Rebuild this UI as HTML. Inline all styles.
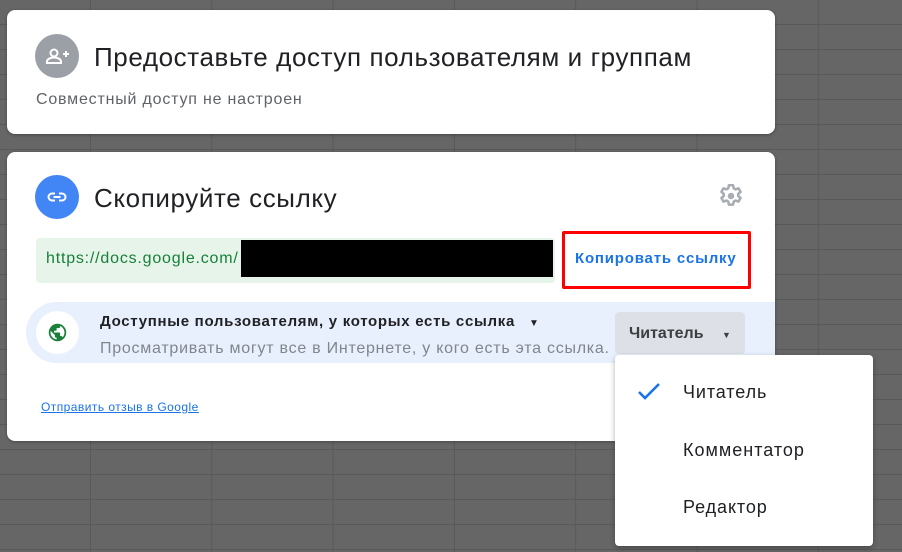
<!DOCTYPE html>
<html><head><meta charset="utf-8"><style>
*{margin:0;padding:0;box-sizing:border-box}
body{width:902px;height:552px;overflow:hidden;position:relative;font-family:"Liberation Sans",Arial,sans-serif;
background-color:#666;
background-image:linear-gradient(to right,#595959 0,#595959 1px,transparent 1px),linear-gradient(to bottom,#595959 0,#595959 1px,transparent 1px);
background-size:121.3px 25px,121.3px 25px;background-position:90px 0,0 24px}
.card{position:absolute;left:7px;width:768px;background:#fff;border-radius:8px;box-shadow:0 1px 3px rgba(0,0,0,.3)}
.abs{position:absolute}
.title{font-size:26px;color:#202124;white-space:nowrap;letter-spacing:0.6px}
</style></head><body>
<div class="card" style="top:10px;height:124px">
  <div class="abs" style="left:28px;top:24px;width:44px;height:44px;border-radius:50%;background:#9aa0a6">
    <svg width="44" height="44" viewBox="0 0 44 44"><circle cx="19" cy="19" r="3.5" fill="none" stroke="#fff" stroke-width="2"/><path d="M12 29v-1.5c0-2.5 4-4 7-4s7 1.5 7 4V29z" fill="none" stroke="#fff" stroke-width="2"/><path d="M28 20h6M31 17v6" stroke="#fff" stroke-width="2"/></svg>
  </div>
  <div class="abs title" style="left:87px;top:32px">Предоставьте доступ пользователям и группам</div>
  <div class="abs" style="left:29px;top:81px;font-size:16px;letter-spacing:0.8px;color:#5f6368">Совместный доступ не настроен</div>
</div>
<div class="card" style="top:152px;height:289px">
  <div class="abs" style="left:28px;top:23px;width:44px;height:44px;border-radius:50%;background:#4285f4">
    <svg width="44" height="44" viewBox="0 0 44 44"><path d="M20 18.5h-3a3.5 3.5 0 0 0 0 7h3M24 18.5h3a3.5 3.5 0 0 1 0 7h-3M18.5 22h7" fill="none" stroke="#fff" stroke-width="2"/></svg>
  </div>
  <div class="abs title" style="left:87px;top:31px">Скопируйте ссылку</div>
  <svg class="abs" style="left:710px;top:30px" width="28" height="28" viewBox="0 0 24 24"><path fill="none" stroke="#a8adb3" stroke-width="2.2" stroke-linejoin="round" d="M10.2 2.8h3.6l.5 2.6 1.6.9 2.5-.9 1.8 3.1-2 1.7v1.8l2 1.7-1.8 3.1-2.5-.9-1.6.9-.5 2.6h-3.6l-.5-2.6-1.6-.9-2.5.9-1.8-3.1 2-1.7v-1.8l-2-1.7 1.8-3.1 2.5.9 1.6-.9z"/><circle cx="12" cy="12" r="2.8" fill="#a8adb3"/></svg>
  <div class="abs" style="left:29px;top:86px;width:519px;height:45px;background:#e6f4ea;border-radius:4px">
    <div class="abs" style="left:10px;top:12px;font-size:16px;letter-spacing:0.8px;color:#188038">https://docs.google.com/</div>
    <div class="abs" style="left:205px;top:2px;width:312px;height:37px;background:#000"></div>
  </div>
  <div class="abs" style="left:555px;top:79px;width:189px;height:58px;border:3px solid #f00;border-radius:2px"></div>
  <div class="abs" style="left:568px;top:98px;font-size:15px;letter-spacing:0.8px;font-weight:bold;color:#1a73e8">Копировать ссылку</div>
  <div class="abs" style="left:19px;top:150px;width:749px;height:61px;background:#e8f0fe;border-radius:31px 0 0 31px">
    <div class="abs" style="left:10px;top:9px;width:43px;height:43px;border-radius:50%;background:#fff">
      <svg class="abs" style="left:11px;top:11px" width="21" height="21" viewBox="0 0 24 24"><path fill="#188038" d="M12 2a10 10 0 1 0 0 20 10 10 0 0 0 0-20zm-1 17.93A8 8 0 0 1 4 12c0-.62.08-1.2.2-1.8L9 15v1a2 2 0 0 0 2 2zm6.9-2.54A2 2 0 0 0 16 16h-1v-3a1 1 0 0 0-1-1H8v-2h2a1 1 0 0 0 1-1V7h2a2 2 0 0 0 2-2v-.4a8 8 0 0 1 2.9 12.8z"/></svg>
    </div>
    <div class="abs" style="left:74px;top:11px;font-size:15px;letter-spacing:0.7px;font-weight:bold;color:#202124;white-space:nowrap">Доступные пользователям, у которых есть ссылка<span style="font-size:10px;margin-left:14px">▼</span></div>
    <div class="abs" style="left:74px;top:38px;font-size:16px;letter-spacing:0.75px;color:#80868b;white-space:nowrap">Просматривать могут все в Интернете, у кого есть эта ссылка.</div>
    <div class="abs" style="left:589px;top:10px;width:130px;height:42px;background:#dde1e7;border-radius:4px;font-size:16px;font-weight:bold;color:#3c4043;padding:13px 0 0 14px;white-space:nowrap">Читатель <span style="font-size:9px;margin-left:14px">▼</span></div>
  </div>
  <div class="abs" style="left:34px;top:248px;font-size:12px;letter-spacing:0.45px;color:#1a73e8;text-decoration:underline">Отправить отзыв в Google</div>
</div>
<div class="abs" style="left:615px;top:355px;width:258px;height:191px;background:#fff;border-radius:4px;box-shadow:0 2px 6px rgba(0,0,0,.3)">
  <svg class="abs" style="left:22px;top:27px" width="24" height="20" viewBox="0 0 24 20"><path d="M2 10l6 6L22 2" fill="none" stroke="#1a73e8" stroke-width="2.6"/></svg>
  <div class="abs" style="left:68px;top:27px;font-size:18px;letter-spacing:0.9px;color:#202124">Читатель</div>
  <div class="abs" style="left:68px;top:85px;font-size:18px;letter-spacing:1px;color:#202124">Комментатор</div>
  <div class="abs" style="left:68px;top:142px;font-size:18px;letter-spacing:0.9px;color:#202124">Редактор</div>
</div>
</body></html>
